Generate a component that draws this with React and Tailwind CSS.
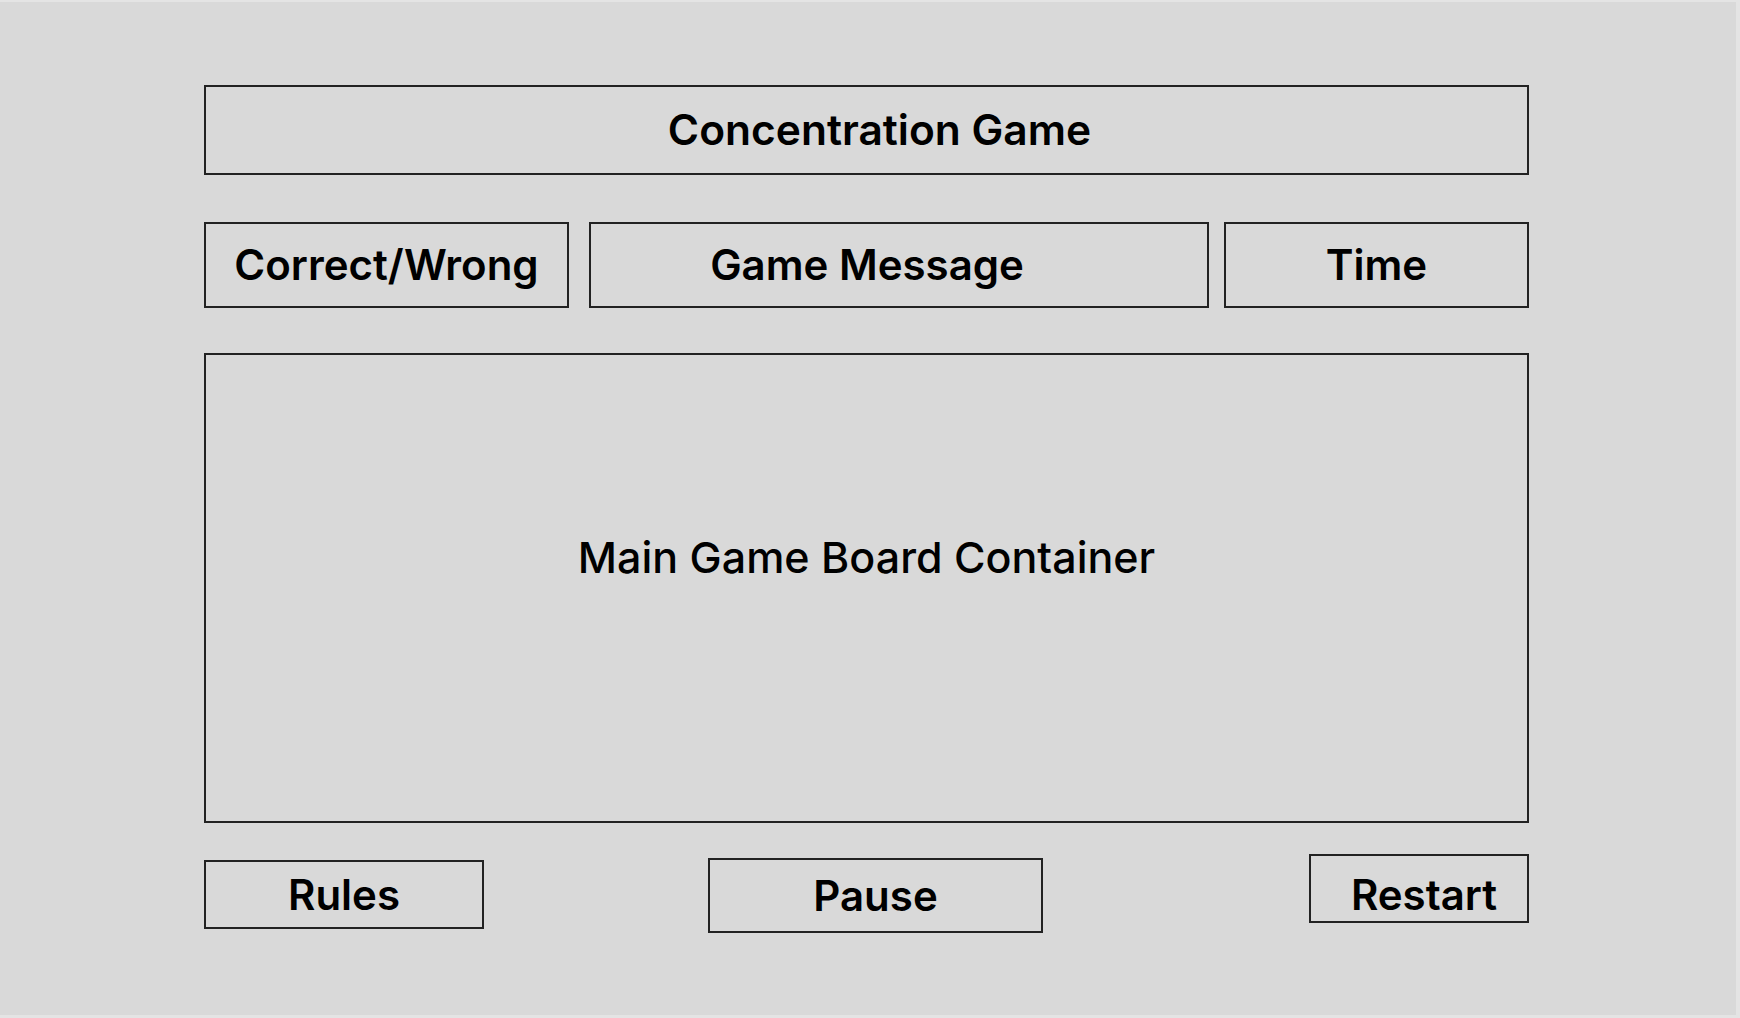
export default function App() {
  const box = 'border-2 border-[#222] flex items-center justify-center'

  return (
    <div className="w-[1740px] h-[1018px] bg-[#e4e4e4] overflow-hidden" style={{ fontFamily: 'Inter, "Noto Sans", sans-serif' }}>
      <div className="mt-[2px] w-[1736px] h-[1013px] bg-[#d9d9d9] pl-[204px] pt-[83px] text-[42px] font-semibold text-black leading-none">
        <div className="w-[1325px]">
          {/* Title */}
          <div className={`${box} h-[90px] pl-[26px] text-[42.5px]`}>Concentration Game</div>

          {/* Status row */}
          <div className="flex mt-[47px] h-[86px]">
            <div className={`${box} w-[365px]`}>Correct/Wrong</div>
            <div className={`${box} w-[620px] ml-[20px] pr-[64px]`}>Game Message</div>
            <div className={`${box} w-[305px] ml-[15px]`}>Time</div>
          </div>

          {/* Board */}
          <div className={`${box} h-[470px] mt-[45px] pb-[62px]`}>
            <span className="font-medium text-[43px]">Main Game Board Container</span>
          </div>

          {/* Controls */}
          <div className="flex items-start">
            <div className={`${box} w-[280px] h-[69px] mt-[37px]`}>Rules</div>
            <div className={`${box} w-[335px] h-[75px] mt-[35px] ml-[224px]`}>Pause</div>
            <div className={`${box} w-[220px] h-[69px] mt-[31px] ml-auto pl-[10px] pt-[12px]`}>Restart</div>
          </div>
        </div>
      </div>
    </div>
  )
}
